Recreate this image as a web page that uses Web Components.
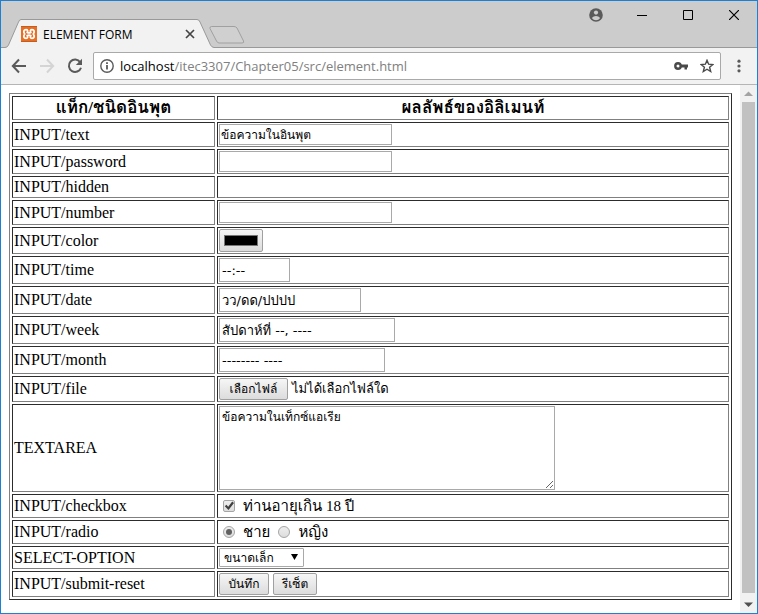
<!DOCTYPE html>
<html lang="th">
<head>
<meta charset="utf-8">
<title>ELEMENT FORM</title>
<style>
  html, body { margin: 0; height: 100%; }
  body { background: #fff; }
</style>
</head>
<body>
<browser-window>
  <tab-strip slot="tabs">ELEMENT FORM</tab-strip>
  <address-bar slot="toolbar" host="localhost" path="/itec3307/Chapter05/src/element.html"></address-bar>
  <element-form></element-form>
</browser-window>

<template id="window-template">
  <style>
    :host { display: flex; flex-direction: column; box-sizing: border-box; min-height: 100vh; border: 1px solid #1c80d4; background: #fff; }
    .page { flex: 1; display: flex; border-top: 1px solid #b5b5b5; }
    .content { flex: 1; min-width: 0; padding: 8px; }
  </style>
  <slot name="tabs"></slot>
  <slot name="toolbar"></slot>
  <div class="page">
    <div class="content"><slot></slot></div>
    <scroll-bar></scroll-bar>
  </div>
</template>

<template id="scroll-template">
  <style>
    :host { display: flex; flex-direction: column; align-items: center; width: 17px; background: #f1f1f1; }
    svg { display: block; width: 17px; height: 17px; flex: none; }
    .thumb { width: 13px; flex: 1; background: #c1c1c1; }
    .track { height: 3px; }
  </style>
  <svg viewBox="0 0 17 17"><path d="M4 11 8.500 6.500 13 11Z" fill="#a3a3a3"/></svg>
  <div class="thumb"></div>
  <div class="track"></div>
  <svg viewBox="0 0 17 17"><path d="M4 6.500h9L8.500 11Z" fill="#505050"/></svg>
</template>

<template id="tabs-template">
  <style>
    :host { display: grid; grid-template-columns: 1fr auto; height: 47px; background: #ccc; color: #000; font: 12px "Open Sans", "Noto Sans", sans-serif; }
    .left, .shape, .caption { grid-row: 1; }
    .shape { grid-column: 1 / 3; width: 100%; height: 47px; }
    .left { grid-column: 1; display: flex; align-items: center; height: 28px; padding: 19px 0 0 20px; }
    .title { width: 139px; margin-left: 6px; white-space: nowrap; }
    .caption { grid-column: 2; display: flex; height: 28px; }
    button { display: grid; place-items: center; width: 46px; height: 28px; padding: 0; border: 0; background: none; }
    .close { width: 16px; height: 16px; }
    .left, .caption { z-index: 1; }
    svg { display: block; }
  </style>
  <svg class="shape" aria-hidden="true">
    <path d="M0 46.500H3000" stroke="#999" fill="none"/>
    <path d="M0 47V46.500H4Q6.500 46.500 7.500 44L17.500 21Q18.500 18.500 20 18.500H196Q198 18.500 199 21L209.500 44Q211 46.500 213 46.500V47Z" fill="#f2f2f2"/>
    <path d="M0 46.500H4Q6.500 46.500 7.500 44L17.500 21Q18.500 18.500 20 18.500H196Q198 18.500 199 21L209.500 44Q211 46.500 213 46.500" fill="none" stroke="#999"/>
    <path d="M210.500 25.500H233Q235 25.500 236 27L242.500 40Q243.500 42 241 42H218Q216.500 42 215.500 40L209 27.500Q208.500 25.500 210.500 25.500Z" fill="#d0d0d0" stroke="#a0a0a0"/>
  </svg>
  <div class="left">
    <svg width="16" height="16" viewBox="0 0 16 16" aria-hidden="true">
      <rect width="16" height="16" rx="1" fill="#e66f25"/><path d="M0 .5H16M0 15.500H16" stroke="#c65d1c"/>
      <path d="M5 3.700C2.700 3.700 2.100 5.800 3.700 8C2.100 10.200 2.700 12.300 5 12.300C6.800 12.300 7 11 6.200 9.600Q8 8.600 9.800 9.600C9 11 9.200 12.300 11 12.300C13.300 12.300 13.900 10.200 12.300 8C13.900 5.800 13.300 3.700 11 3.700C9.200 3.700 9 5 9.800 6.400Q8 7.400 6.200 6.400C7 5 6.800 3.700 5 3.700Z" fill="none" stroke="#fff" stroke-width="1.800" stroke-linejoin="round"/>
    </svg>
    <span class="title"><slot></slot></span>
    <button class="close" aria-label="Close tab"><svg width="16" height="16"><path d="M4 4l8 8M12 4l-8 8" stroke="#444" stroke-width="1.700"/></svg></button>
  </div>
  <div class="caption">
    <button aria-label="Profile"><svg width="14" height="14" viewBox="0 0 14 14"><circle cx="7" cy="7" r="6.800" fill="#5a5a5a"/><circle cx="7" cy="4.600" r="2.100" fill="#ccc"/><path d="M2.800 10Q4.500 8 7 8T11.200 10Q9.500 12.200 7 12.200T2.800 10Z" fill="#ccc"/></svg></button>
    <button aria-label="Minimize"><svg width="10" height="10"><path d="M0 5.500H10" stroke="#000"/></svg></button>
    <button aria-label="Maximize"><svg width="10" height="10"><path d="M.5.5h9v9h-9z" fill="none" stroke="#000"/></svg></button>
    <button aria-label="Close"><svg width="10" height="10"><path d="M0 0l10 10M10 0L0 10" stroke="#000" stroke-width="1.200"/></svg></button>
  </div>
</template>

<template id="address-template">
  <style>
    :host { display: flex; align-items: center; height: 36px; background: #f2f2f2; font: 13px "Open Sans", "Noto Sans", sans-serif; }
    nav { display: flex; padding-left: 4px; }
    button { display: grid; place-items: center; width: 28px; height: 28px; padding: 0; border: 0; background: none; flex: none; }
    .box { flex: 1; display: flex; align-items: center; box-sizing: border-box; height: 28px; margin-left: 4px; border: 1px solid #a9a9a9; border-radius: 2px; background: #fff; }
    .url { flex: 1; white-space: nowrap; color: #808080; text-decoration: none; }
    b { font-weight: 400; color: #000; }
    .box button { width: 26px; height: 26px; }
    .menu { width: 36px; }
  </style>
  <nav>
    <button aria-label="Back"><svg width="16" height="16"><path d="M15 8H2M8 1.500 1.800 8 8 14.500" fill="none" stroke="#5a5a5a" stroke-width="2"/></svg></button>
    <button aria-label="Forward"><svg width="16" height="16"><path d="M1 8H14M8 1.500 14.200 8 8 14.500" fill="none" stroke="#d4d4d4" stroke-width="2"/></svg></button>
    <button aria-label="Reload"><svg width="16" height="16"><path d="M13.200 4.200A6.200 6.200 0 1 0 14 9.700" fill="none" stroke="#5a5a5a" stroke-width="2"/><path d="M15 .8V7H8.800Z" fill="#5a5a5a"/></svg></button>
  </nav>
  <div class="box">
    <button aria-label="Site information"><svg width="14" height="14"><circle cx="7" cy="7" r="6.200" fill="none" stroke="#5a5a5a" stroke-width="1.400"/><path d="M7 6v4.500M7 3.300v1.700" stroke="#444" stroke-width="1.600"/></svg></button>
    <a class="url" href="#"><b></b><span></span></a>
    <button aria-label="Passwords"><svg width="14" height="10"><circle cx="4" cy="5" r="2.700" fill="none" stroke="#4a4a4a" stroke-width="2.400"/><path d="M7 3.500h7v3h-1v2h-2.500v-2H7Z" fill="#4a4a4a"/></svg></button>
    <button aria-label="Bookmark"><svg width="14" height="14" viewBox="0 0 14 14"><path d="M7 1.300 8.600 5.200 12.900 5.500 9.600 8.200 10.700 12.500 7 10.200 3.300 12.500 4.400 8.200 1.100 5.500 5.400 5.200Z" fill="none" stroke="#4a4a4a" stroke-width="1.400"/></svg></button>
  </div>
  <button class="menu" aria-label="Menu"><svg width="4" height="14"><circle cx="2" cy="2.200" r="1.600" fill="#5a5a5a"/><circle cx="2" cy="7" r="1.600" fill="#5a5a5a"/><circle cx="2" cy="11.800" r="1.600" fill="#5a5a5a"/></svg></button>
</template>

<template id="form-template">
  <style>
    :host { display: block; color: #000; font: 16px/18px "Liberation Serif", "Loma", serif; --control: 13px/16px "DejaVu Sans", "Loma", sans-serif; }
    form { margin: 0; }
    table { width: 100%; table-layout: fixed; border: 1px solid; border-color: #808080 #2c2c2c #2c2c2c #808080; border-spacing: 2px; }
    col:first-child { width: 203px; }
    th, td { box-sizing: border-box; height: 28px; padding: 1px; border: 1px solid; border-color: #2c2c2c #808080 #808080 #2c2c2c; text-align: left; vertical-align: middle; white-space: nowrap; }
    th { text-align: center; font-size: 17px; }
    .head > *, .tick > * { height: 24px; }
    .line > * { height: 25px; }
    .hidden > * { height: 22px; }
    .color > * { height: 27px; }
    .push > * { height: 26px; }
    .area > * { height: 88px; }
    .pick > * { height: 23px; }
    .row { display: flex; align-items: center; gap: 4px; }
    .tick .row { gap: 8px; padding-left: 4px; font-size: 15px; }
    input, textarea, select, button { box-sizing: border-box; margin: 0; color: #000; font: var(--control); }
    .text, textarea { display: block; height: 21px; width: 173px; padding: 1px; border: 1px solid #a9a9a9; border-radius: 0; background: #fff; }
    #text { font-size: 12px; }
    .tall { height: 24px; padding: 2px; }
    .time { width: 71px; } .date { width: 142px; } .week { width: 176px; } .month { width: 166px; }
    textarea { width: 336px; height: 84px; padding: 2px; font-size: 12px; }
    button, .swatch { height: 22px; border: 1px solid #a0a0a0; border-radius: 2px; background: linear-gradient(#f6f6f6, #dcdcdc); }
    .choose { width: 69px; } .save { width: 50px; } .reset { width: 44px; }
    button { padding: 0; font-size: 12px; }
    .swatch { display: block; width: 44px; height: 23px; padding: 5px 4px; }
    .swatch::-webkit-color-swatch-wrapper { padding: 0; }
    .swatch::-webkit-color-swatch { border: 1px solid #777; border-radius: 0; }
    select { display: block; appearance: none; width: 85px; height: 19px; padding: 0 4px; border: 1px solid #a9a9a9; border-radius: 1px; background: #fff; font-size: 12px; }
    .select { display: grid; width: 85px; }
    .select > * { grid-area: 1 / 1; }
    .select svg { justify-self: end; margin: 6px 6px 0 0; pointer-events: none; }
    .file { font: var(--control); }
    [type=checkbox], [type=radio] { appearance: none; width: 12px; height: 12px; border: 1px solid #a5a5a5; border-radius: 2px; background: linear-gradient(#eee, #ddd); display: grid; place-items: center; }
    [type=radio] { border-radius: 50%; }
    [type=radio]:checked::after { content: ""; width: 6px; height: 6px; border-radius: 50%; background: #606060; }
    [type=checkbox]:checked::after { content: ""; width: 10px; height: 10px; background: #404040; clip-path: polygon(8% 52%, 24% 38%, 42% 58%, 82% 5%, 100% 20%, 45% 90%); }
  </style>
  <form>
  <table>
    <colgroup><col><col></colgroup>
    <tr class="head"><th>แท็ก/ชนิดอินพุต</th><th>ผลลัพธ์ของอิลิเมนท์</th></tr>
    <tr class="line"><td><label for="text">INPUT/text</label></td><td><input class="text" id="text" value="ข้อความในอินพุต"></td></tr>
    <tr class="line"><td><label for="password">INPUT/password</label></td><td><input class="text" type="password" id="password"></td></tr>
    <tr class="hidden"><td>INPUT/hidden</td><td><input type="hidden"></td></tr>
    <tr class="line"><td><label for="number">INPUT/number</label></td><td><input class="text" type="number" id="number"></td></tr>
    <tr class="color"><td><label for="color">INPUT/color</label></td><td><input class="swatch" type="color" id="color" value="#000000"></td></tr>
    <tr><td><label for="time">INPUT/time</label></td><td><input class="text tall time" id="time" value="--:--"></td></tr>
    <tr><td><label for="date">INPUT/date</label></td><td><input class="text tall date" id="date" value="วว/ดด/ปปปป"></td></tr>
    <tr><td><label for="week">INPUT/week</label></td><td><input class="text tall week" id="week" value="สัปดาห์ที่ --, ----"></td></tr>
    <tr><td><label for="month">INPUT/month</label></td><td><input class="text tall month" id="month" value="-------- ----"></td></tr>
    <tr class="push"><td><label for="file">INPUT/file</label></td><td><div class="row"><button class="choose" type="button" id="file">เลือกไฟล์</button><span class="file">ไม่ได้เลือกไฟล์ใด</span></div></td></tr>
    <tr class="area"><td><label for="area">TEXTAREA</label></td><td><textarea id="area">ข้อความในเท็กซ์แอเรีย</textarea></td></tr>
    <tr class="tick"><td>INPUT/checkbox</td><td><div class="row"><input type="checkbox" id="adult" checked><label for="adult">ท่านอายุเกิน 18 ปี</label></div></td></tr>
    <tr class="tick"><td>INPUT/radio</td><td><div class="row"><input type="radio" name="sex" id="male" checked><label for="male">ชาย</label><input type="radio" name="sex" id="female"><label for="female">หญิง</label></div></td></tr>
    <tr class="pick"><td><label for="size">SELECT-OPTION</label></td><td><div class="select"><select id="size"><option>ขนาดเล็ก</option></select><svg width="7" height="6"><path d="M0 0h7L3.500 6Z"/></svg></div></td></tr>
    <tr class="push"><td>INPUT/submit-reset</td><td><div class="row"><button class="save" type="submit">บันทึก</button><button class="reset" type="reset">รีเซ็ต</button></div></td></tr>
  </table>
  </form>
</template>

<script>
  class TemplateElement extends HTMLElement {
    connectedCallback() {
      if (this.shadowRoot) return;
      const root = this.attachShadow({ mode: "open" });
      root.append(document.getElementById(this.constructor.template).content.cloneNode(true));
      this.ready(root);
    }
    ready() {}
  }
  class BrowserWindow extends TemplateElement { static template = "window-template"; }
  class ScrollBar extends TemplateElement { static template = "scroll-template"; }
  class TabStrip extends TemplateElement { static template = "tabs-template"; }
  class AddressBar extends TemplateElement {
    static template = "address-template";
    ready(root) {
      root.querySelector("b").textContent = this.getAttribute("host");
      root.querySelector(".url span").textContent = this.getAttribute("path");
    }
  }
  class ElementForm extends TemplateElement {
    static template = "form-template";
    ready(root) {
      root.querySelector("form").addEventListener("submit", e => e.preventDefault());
    }
  }
  customElements.define("browser-window", BrowserWindow);
  customElements.define("scroll-bar", ScrollBar);
  customElements.define("tab-strip", TabStrip);
  customElements.define("address-bar", AddressBar);
  customElements.define("element-form", ElementForm);
</script>
</body>
</html>
